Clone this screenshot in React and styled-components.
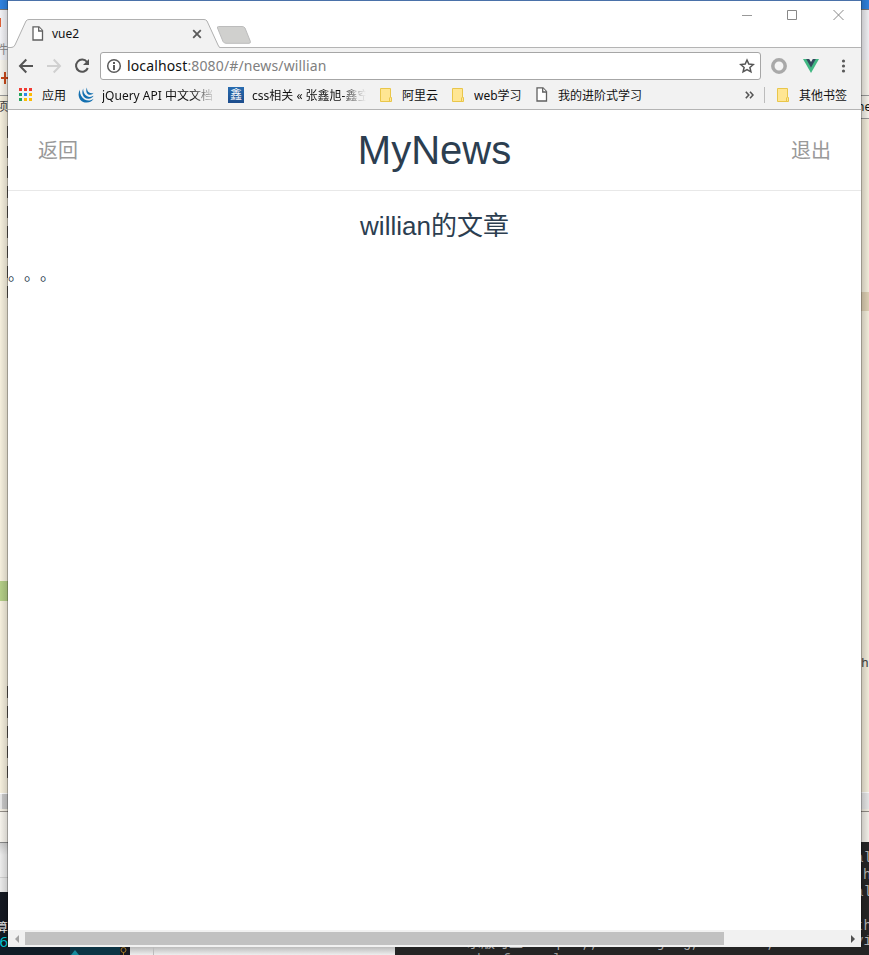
import React from 'react';
import styled, { createGlobalStyle } from 'styled-components';

const GlobalStyle = createGlobalStyle`
  * { box-sizing: border-box; }
  html, body { margin: 0; padding: 0; overflow: hidden; }
  svg { display: block; flex: none; }
`;

const uiFont = '"Noto Sans", "Noto Sans CJK SC", sans-serif';
const pageFont = '"Liberation Sans", "Noto Sans CJK SC", sans-serif';

const Desktop = styled.div`
  width: 869px;
  height: 955px;
  display: grid;
  grid-template-columns: 8px 853px 8px;
  grid-template-rows: 947px 8px;
  overflow: hidden;
  background: #242424;
  font-family: ${uiFont};
`;

const Strip = styled.div`
  display: flex;
  flex-direction: column;
  position: relative;
  overflow: hidden;
  &::after {
    content: '';
    position: absolute;
    inset: 0;
    background: ${(p) => (p.$to === 'right'
      ? 'linear-gradient(to right, rgba(0,0,0,0) 0, rgba(0,0,0,.13) 7px, rgba(0,0,0,.36) 7px)'
      : 'linear-gradient(to left, rgba(0,0,0,.02) 0, rgba(0,0,0,.17) 7px, rgba(0,0,0,.36) 7px)')};
  }
`;

const Band = styled.div`
  flex: none;
  height: ${(p) => p.$h}px;
  background: ${(p) => p.$bg};
  color: ${(p) => p.$color || '#444'};
  font: ${(p) => p.$size || 12}px/${(p) => p.$h}px ${(p) => p.$font || uiFont};
  text-indent: ${(p) => p.$indent || 0}px;
  white-space: nowrap;
  overflow: hidden;
  direction: ${(p) => p.$dir || 'ltr'};
`;

const Ticks = styled(Band)`
  background: linear-gradient(#5a5650, #5a5650) 7px 6px / 1px 12px no-repeat, #f5efdd;
`;

const BottomStrip = styled.div`
  grid-column: 1 / 4;
  display: flex;
  overflow: hidden;
  box-shadow: inset 0 1px 0 #777;
`;

const BottomPart = styled.div`
  flex: none;
  width: ${(p) => p.$w}px;
  height: 8px;
  background: ${(p) => p.$bg};
  overflow: hidden;
`;

const ClippedLine = styled.div`
  height: ${(p) => p.$h}px;
  padding-left: ${(p) => p.$pad}px;
  display: flex;
  align-items: ${(p) => p.$align};
  overflow: hidden;
  color: ${(p) => p.$color};
  font: 14px/17px "Liberation Mono", "Noto Sans CJK SC", monospace;
  white-space: pre;
`;

const BrowserWindow = styled.main`
  display: flex;
  flex-direction: column;
  background: #fff;
  min-width: 0;
`;

const TabStrip = styled.div`
  height: 48px;
  flex: none;
  display: flex;
  border-top: 1px solid #4a71a9;
  background: linear-gradient(#b4b4b4, #b4b4b4) bottom / 100% 1px no-repeat, #fff;
`;

const Tab = styled.div`
  width: 212px;
  height: 47px;
  padding: 18px 18px 0 24px;
  display: grid;
  grid-template-columns: 20px 1fr 10px;
  align-items: center;
  position: relative;
  isolation: isolate;
  font-size: 12px;
  line-height: 28px;
  color: #111;
`;

const TabShape = styled.svg`
  position: absolute;
  left: 0;
  top: 17px;
  z-index: -1;
`;

const NewTab = styled.svg`
  margin: 25px 0 0 -4px;
`;

const WindowButtons = styled.div`
  margin-left: auto;
  padding: 8px 16px 0 0;
  height: 22px;
  display: flex;
  gap: 34px;
`;

const Toolbar = styled.div`
  height: 32px;
  flex: none;
  background: #f2f2f2;
  padding: 4px 9px 0 10px;
  display: flex;
  align-items: center;
`;

const NavButtons = styled.div`
  width: 82px;
  display: flex;
  gap: 12px;
`;

const AddressBar = styled.div`
  width: 661px;
  height: 28px;
  padding: 0 5px 0 5px;
  display: flex;
  align-items: center;
  background: #fff;
  border: 1px solid #a6a6a6;
  border-radius: 3px;
`;

const Url = styled.span`
  flex: 1;
  margin-left: 5px;
  font-size: 14px;
  line-height: 26px;
  letter-spacing: 0.14px;
  color: #808080;
`;

const Host = styled.span`
  color: #111;
`;

const Extensions = styled.div`
  flex: 1;
  padding-left: 10px;
  display: flex;
  align-items: center;
  justify-content: space-between;
`;

const BookmarkBar = styled.div`
  height: 30px;
  flex: none;
  display: flex;
  align-items: center;
  padding-left: 10px;
  background: #f2f2f2;
  border-bottom: 1px solid #b4b4b4;
`;

const Bookmark = styled.div`
  flex: none;
  width: ${(p) => p.$w}px;
  display: flex;
  align-items: center;
`;

const BookmarkIcon = styled.span`
  width: ${(p) => p.$w || 24}px;
  flex: none;
`;

const BookmarkLabel = styled.span`
  width: ${(p) => (p.$w ? `${p.$w}px` : 'auto')};
  padding-top: 2px;
  font-size: 12px;
  line-height: 22px;
  color: #111;
  white-space: nowrap;
  overflow: hidden;
  ${(p) => p.$fade && 'mask-image: linear-gradient(to left, transparent, #000 24px);'}
`;

const SiteBadge = styled.span`
  display: block;
  width: 16px;
  height: 16px;
  background: linear-gradient(#286cb0, #1c4c8c);
  color: #fff;
  font-size: 12px;
  line-height: 15px;
  text-align: center;
`;

const Divider = styled.span`
  width: 1px;
  height: 16px;
  background: #bcbcbc;
  margin: 0 12px 0 10px;
`;

const Page = styled.section`
  flex: 1;
  min-height: 0;
  color: #2c3e50;
  font-family: ${pageFont};
`;

const PageHeader = styled.header`
  height: 81px;
  padding: 0 30px;
  display: grid;
  grid-template-columns: 80px 1fr 80px;
  align-items: center;
  border-bottom: 1px solid #e8e8e8;
`;

const HeaderLink = styled.a`
  padding-top: 2px;
  font-size: 20px;
  line-height: 78px;
  color: #999;
  text-align: ${(p) => p.$align};
`;

const Title = styled.h1`
  margin: 0;
  font-size: 40px;
  font-weight: 400;
  line-height: 80px;
  text-align: center;
`;

const ArticleTitle = styled.h2`
  margin: 0;
  height: 70px;
  font-size: 26px;
  font-weight: 400;
  line-height: 70px;
  text-align: center;
`;

const ArticleBody = styled.p`
  margin: 0;
  padding-top: 2px;
  font-size: 16px;
  line-height: 24px;
  text-spacing-trim: space-all;
  font-kerning: none;
`;

const ScrollBar = styled.div`
  height: 17px;
  flex: none;
  background: #f1f1f1;
  display: grid;
  grid-template-columns: 17px 699px 1fr 17px;
  align-items: center;
  justify-items: center;
`;

const ScrollThumb = styled.div`
  width: 100%;
  height: 13px;
  background: #c1c1c1;
`;

const PageIcon = () => (
  <svg width="12" height="15" viewBox="0 0 12 15" fill="#fff" stroke="#606060" strokeWidth="1.3">
    <path d="M1 .9H7L10.5 4.6V14H1Z" />
    <path d="M6.7 1V5H10.5" />
  </svg>
);

const FolderIcon = () => (
  <svg width="14" height="14" viewBox="0 0 14 14">
    <path d="M.5.5H10.5V9.5H11.5V13.5H.5Z" fill="#ffe693" stroke="#e9c64a" />
    <path d="M9.5 13V9.5" stroke="#e9c64a" />
  </svg>
);

const appColors = ['#f03a32', '#f03a32', '#f03a32', '#23a35c', '#2d87ee', '#fbbc05', '#23a35c', '#fbbc05', '#fbbc05'];

const AppsIcon = () => (
  <svg width="14" height="14" viewBox="0 0 14 14">
    {appColors.map((color, i) => (
      <rect key={i} x={1 + (i % 3) * 5} y={Math.floor(i / 3) * 5} width="3" height="3" fill={color} />
    ))}
  </svg>
);

const JQueryIcon = () => (
  <svg width="17" height="16" viewBox="0 0 17 16" fill="#1470b0">
    <path d="M2 2.5C-1.4 8 1.6 15.5 8.6 15.6C12 15.6 14.4 14 15.6 11.8C12.5 14 9.5 14 6.6 12.4C3.2 10.4 1.6 6.6 2 2.5Z" />
    <path d="M5.2 1.4C3 6 5.2 11.5 10.2 11.7C12.8 11.8 14.6 10.6 15.6 8.8C13.2 10.2 10.8 10.2 8.8 9C6.4 7.6 5 4.6 5.2 1.4Z" />
    <path d="M9 .4C7.2 4 8.8 7.6 12.2 7.8C13.8 7.8 14.9 7 15.6 5.8C14 6.6 12.4 6.4 11.2 5.6C9.6 4.5 8.8 2.5 9 .4Z" />
  </svg>
);

const repeat = (n, fn) => Array.from({ length: n }, (_, i) => fn(i));
const mono = '"Liberation Mono", monospace';

export default function App() {
  return (
    <Desktop>
      <GlobalStyle />
      <Strip $to="right">
        <Band $h={9} $bg="#2f82df" />
        <Band $h={1} $bg="#777" />
        <Band $h={8} $bg="#f1f1f5" />
        <Band $h={9} $bg="linear-gradient(to right, #dd6038 1px, #f1f1f5 1px)" />
        <Band $h={13} $bg="#f1f1f5" />
        <Band $h={20} $bg="#f1f1f5" $color="#888" $dir="rtl">件</Band>
        <Band $h={8} $bg="#f7f4ec" />
        <Band $h={20} $bg="linear-gradient(#c84818, #c84818) 4px 4px / 2px 12px no-repeat, linear-gradient(#c84818, #c84818) 1px 9px / 7px 2px no-repeat, #f7f4ec" />
        <Band $h={7} $bg="#f7f4ec" />
        <Band $h={1} $bg="#999" />
        <Band $h={22} $bg="#f5efdd" $dir="rtl">项</Band>
        <Band $h={2} $bg="#f5efdd" />
        {repeat(9, (i) => <Ticks $h={20} key={i} />)}
        <Band $h={281} $bg="#f5efdd" />
        <Band $h={20} $bg="#b3cd86" />
        <Band $h={79} $bg="#f5efdd" />
        {repeat(5, (i) => <Ticks $h={20} key={i} />)}
        <Band $h={13} $bg="#f5efdd" />
        <Band $h={1} $bg="#fff" />
        <Band $h={15} $bg="linear-gradient(to right, #e8e8e8 2px, #c8c8c8 2px)" />
        <Band $h={2} $bg="#f3efe4" />
        <Band $h={1} $bg="#948e88" />
        <Band $h={30} $bg="#f5f2eb" />
        <Band $h={1} $bg="#888" />
        <Band $h={34} $bg="linear-gradient(#cfcfcf, #ececec 12px)" />
        <Band $h={1} $bg="#d0d0d0" />
        <Band $h={14} $bg="#eaeaea" />
        <Band $h={28} $bg="#151922" />
        <Band $h={16} $bg="#151922" $color="#eee" $dir="rtl">算</Band>
        <Band $h={11} $bg="#101821" $color="#00c9d6" $size={15} $dir="rtl">6</Band>
      </Strip>

      <BrowserWindow>
        <TabStrip>
          <Tab>
            <TabShape width="212" height="30" viewBox="0 0 212 30">
              <path d="M0 29.5H3Q6 29.5 7 27L18 3Q19 1.5 21 1.5H196Q198 1.5 199 3L210 27Q211 29.5 212 29.5V30H0Z" fill="#f2f2f2" />
              <path d="M0 29.5H3Q6 29.5 7 27L18 3Q19 1.5 21 1.5H196Q198 1.5 199 3L210 27Q211 29.5 212 29.5" fill="none" stroke="#b0b0b0" />
            </TabShape>
            <PageIcon />
            <span>vue2</span>
            <svg width="10" height="10" viewBox="0 0 10 10" stroke="#5a5a5a" strokeWidth="1.8"><path d="M1.2 1.2L8.8 8.8M8.8 1.2L1.2 8.8" /></svg>
          </Tab>
          <NewTab width="36" height="18" viewBox="0 0 36 18">
            <path d="M2.5.5H26Q28 .5 29 2L34.4 15.5Q34.8 17.3 33 17.3H10Q8 17.3 7 15.5L1.5 2Q1 .5 2.5 .5Z" fill="#d0d0ce" stroke="#bcbcbc" />
          </NewTab>
          <WindowButtons>
            <svg width="12" height="12" viewBox="0 0 12 12" stroke="#999"><path d="M1 6.5H11" /></svg>
            <svg width="12" height="12" viewBox="0 0 12 12" fill="none" stroke="#888"><path d="M.5 1.5H9.5V10.5H.5Z" /></svg>
            <svg width="12" height="12" viewBox="0 0 12 12" stroke="#888"><path d="M.5 1L10.5 11M10.5 1L.5 11" /></svg>
          </WindowButtons>
        </TabStrip>

        <Toolbar>
          <NavButtons>
            <svg width="16" height="16" viewBox="0 0 16 16" fill="none" stroke="#555" strokeWidth="2"><path d="M15 8H2.5M8.3 1.5L2 8L8.3 14.5" /></svg>
            <svg width="16" height="16" viewBox="0 0 16 16" fill="none" stroke="#d0d0d0" strokeWidth="2"><path d="M1 8H13.5M7.7 1.5L14 8L7.7 14.5" /></svg>
            <svg width="16" height="16" viewBox="0 0 16 16"><path d="M13 4A6.1 6.1 0 1 0 13.8 10" fill="none" stroke="#555" strokeWidth="2" /><path d="M15 1V7H9Z" fill="#555" /></svg>
          </NavButtons>
          <AddressBar>
            <svg width="16" height="16" viewBox="0 0 16 16"><circle cx="8" cy="8" r="6.3" fill="none" stroke="#5a5a5a" strokeWidth="1.5" /><path d="M7 7H9V12H7ZM7 4H9V6H7Z" fill="#5a5a5a" /></svg>
            <Url><Host>localhost</Host>:8080/#/news/willian</Url>
            <svg width="16" height="16" viewBox="0 0 16 16" fill="none" stroke="#555" strokeWidth="1.5"><path d="M8 2L9.8 6.1L14.3 6.5L10.9 9.5L11.9 13.8L8 11.5L4.1 13.8L5.1 9.5L1.7 6.5L6.2 6.1Z" /></svg>
          </AddressBar>
          <Extensions>
            <svg width="16" height="16" viewBox="0 0 16 16"><circle cx="8" cy="8" r="6.2" fill="#f5f5f5" stroke="#a9a9a9" strokeWidth="3.5" /></svg>
            <svg width="16" height="14" viewBox="0 0 16 14"><path d="M0 0H16L8 14Z" fill="#41b883" /><path d="M3.2 0H12.8L8 8.4Z" fill="#34495e" /><path d="M6.2 0H9.8L8 3Z" fill="#f2f2f2" /></svg>
            <svg width="18" height="14" viewBox="0 0 18 14" fill="#5a5a5a"><circle cx="9.5" cy="2" r="1.6" /><circle cx="9.5" cy="7" r="1.6" /><circle cx="9.5" cy="12" r="1.6" /></svg>
          </Extensions>
        </Toolbar>

        <BookmarkBar>
          <Bookmark $w={60}><BookmarkIcon><AppsIcon /></BookmarkIcon><BookmarkLabel>应用</BookmarkLabel></Bookmark>
          <Bookmark $w={150}><BookmarkIcon><JQueryIcon /></BookmarkIcon><BookmarkLabel $w={114} $fade>jQuery API 中文文档</BookmarkLabel></Bookmark>
          <Bookmark $w={152}><BookmarkIcon><SiteBadge>鑫</SiteBadge></BookmarkIcon><BookmarkLabel $w={114} $fade>css相关 « 张鑫旭-鑫空间</BookmarkLabel></Bookmark>
          <Bookmark $w={72}><BookmarkIcon $w={22}><FolderIcon /></BookmarkIcon><BookmarkLabel>阿里云</BookmarkLabel></Bookmark>
          <Bookmark $w={84}><BookmarkIcon $w={22}><FolderIcon /></BookmarkIcon><BookmarkLabel>web学习</BookmarkLabel></Bookmark>
          <Bookmark $w={209}><BookmarkIcon $w={22}><PageIcon /></BookmarkIcon><BookmarkLabel>我的进阶式学习</BookmarkLabel></Bookmark>
          <svg width="9" height="8" viewBox="0 0 9 8" fill="none" stroke="#555" strokeWidth="1.6"><path d="M.8 .8L3.8 4L.8 7.2M5 .8L8 4L5 7.2" /></svg>
          <Divider />
          <Bookmark $w={72}><BookmarkIcon $w={22}><FolderIcon /></BookmarkIcon><BookmarkLabel>其他书签</BookmarkLabel></Bookmark>
        </BookmarkBar>

        <Page>
          <PageHeader>
            <HeaderLink $align="left">返回</HeaderLink>
            <Title>MyNews</Title>
            <HeaderLink $align="right">退出</HeaderLink>
          </PageHeader>
          <ArticleTitle>willian的文章</ArticleTitle>
          <ArticleBody>。。。</ArticleBody>
        </Page>

        <ScrollBar>
          <svg width="6" height="8" viewBox="0 0 6 8"><path d="M5 0V8L1 4Z" fill="#a3a3a3" /></svg>
          <ScrollThumb />
          <span />
          <svg width="6" height="8" viewBox="0 0 6 8"><path d="M1 0V8L5 4Z" fill="#505050" /></svg>
        </ScrollBar>
      </BrowserWindow>

      <Strip $to="left">
        <Band $h={9} $bg="#2f82df" />
        <Band $h={1} $bg="#777" />
        <Band $h={50} $bg="#f1f1f5" />
        <Band $h={35} $bg="#f7f4ec" />
        <Band $h={1} $bg="#999" />
        <Band $h={22} $bg="#f7f4ec" $color="#111" $indent={-4}>ne</Band>
        <Band $h={1} $bg="#999" />
        <Band $h={173} $bg="#f5efdd" />
        <Band $h={19} $bg="#dfd1b5" />
        <Band $h={343} $bg="#f5efdd" />
        <Band $h={20} $bg="#f5efdd" $size={13} $font={mono}>h</Band>
        <Band $h={118} $bg="#f5efdd" />
        <Band $h={1} $bg="#fff" />
        <Band $h={16} $bg="#e8e8e8" />
        <Band $h={2} $bg="#f3efe4" />
        <Band $h={1} $bg="#948e88" />
        <Band $h={30} $bg="#f5f2eb" />
        <Band $h={8} $bg="#262626" />
        <Band $h={17} $bg="#262626" $color="#bbb" $size={14} $font={mono} $indent={-6}>al</Band>
        <Band $h={17} $bg="#262626" $color="#bbb" $size={14} $font={mono} $indent={2}>h</Band>
        <Band $h={17} $bg="#262626" $color="#bbb" $size={14} $font={mono} $indent={-6}>al</Band>
        <Band $h={17} $bg="#262626" />
        <Band $h={17} $bg="#262626" $color="#bbb" $size={14} $font={mono} $indent={-6}>th</Band>
        <Band $h={12} $bg="#262626" $color="#bbb" $size={14} $font={mono} $indent={-6}>vi</Band>
      </Strip>

      <BottomStrip>
        <BottomPart $w={70} $bg="#101c26">
          <ClippedLine $h={3} $pad={12} $align="flex-end" $color="#00a9b6">个月</ClippedLine>
        </BottomPart>
        <BottomPart $w={50} $bg="#0c3444">
          <svg width="12" height="8" viewBox="0 0 12 8"><path d="M1 8L5 3L9 8Z" fill="#168a9c" /></svg>
        </BottomPart>
        <BottomPart $w={10} $bg="#151821">
          <svg width="10" height="8" viewBox="0 0 10 8" fill="none" stroke="#9b7224"><circle cx="3.5" cy="3" r="2.5" /><path d="M3.5 5V8" /></svg>
        </BottomPart>
        <BottomPart $w={23} $bg="linear-gradient(#bbb, #eee)" />
        <BottomPart $w={1} $bg="#bbb" />
        <BottomPart $w={241} $bg="linear-gradient(#bbb, #eee)" />
        <BottomPart $w={474} $bg="#242424">
          <ClippedLine $h={5} $pad={72} $align="flex-end" $color="#aaa">示版可里    p  ,,       j  g,        ,</ClippedLine>
          <ClippedLine $h={3} $pad={82} $align="flex-start" $color="#999">h  f     l</ClippedLine>
        </BottomPart>
      </BottomStrip>
    </Desktop>
  );
}
